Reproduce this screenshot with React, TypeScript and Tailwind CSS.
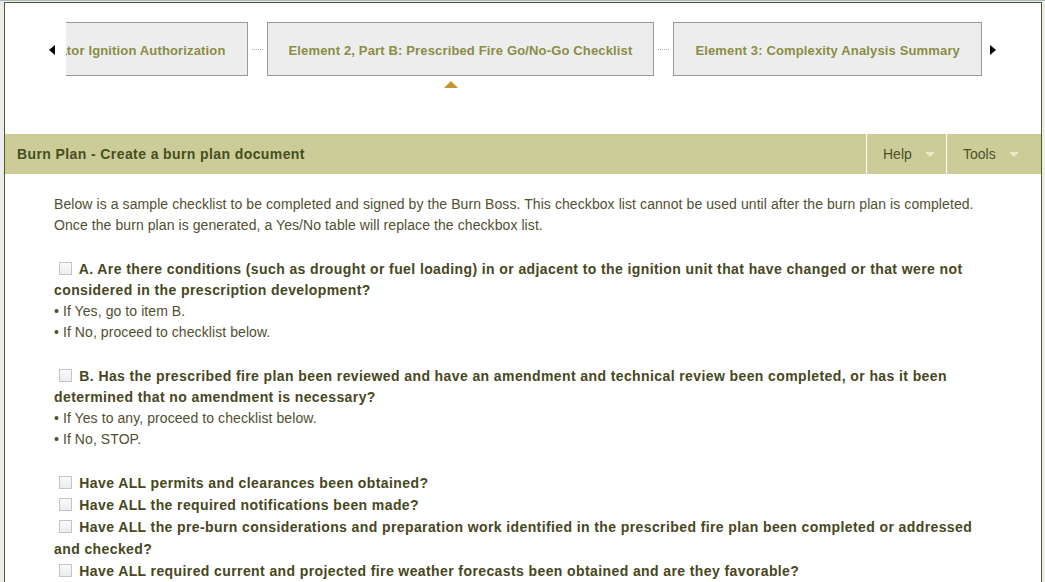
import React from 'react'

const FONT = { fontFamily: '"Liberation Sans", Arial, sans-serif' }

function Tab({ label, active }: { label: string; active?: boolean }) {
  return (
    <div className="relative shrink-0">
      <div className="h-[54px] px-[21px] pt-[3px] flex items-center border border-[#999999] bg-[#ededed] text-[13px] tracking-[0.15px] font-bold text-[#8b8c46] whitespace-nowrap">
        {label}
      </div>
      {/* active marker */}
      {active && (
        <div className="absolute top-[59px] left-[177px] w-0 h-0 border-l-[7px] border-r-[7px] border-b-[7px] border-l-transparent border-r-transparent border-b-[#c8962e]" />
      )}
    </div>
  )
}

function Connector() {
  return (
    <div className="shrink-0 w-[19px] h-[54px] flex items-center justify-center">
      <div className="w-[11px] border-t border-dotted border-[#aaaaaa]" />
    </div>
  )
}

function Box() {
  return (
    <span className="inline-block w-[13px] h-[13px] ml-[5px] mr-[3px] align-[-1px] border border-[#c4c4c4] bg-gradient-to-b from-[#fbfbfb] to-[#ececec]" />
  )
}

function Dropdown({ label, width }: { label: string; width: string }) {
  return (
    <div className={`${width} h-full border-l border-white flex items-center pl-[16px] pt-[1px] gap-[13px] text-[14px] text-[#4b5124]`}>
      <span>{label}</span>
      <span className="w-0 h-0 border-l-[5px] border-r-[5px] border-t-[5px] border-l-transparent border-r-transparent border-t-[#e9e9cc]" />
    </div>
  )
}

export default function App() {
  return (
    <div style={FONT} className="min-h-screen bg-[#ececec] border-t border-[#a9b6c4] pt-[1px] pl-[4px] pr-[3px]">
      <div className="border border-[#4d5a22] bg-white min-h-[600px]">
        {/* Element carousel */}
        <div className="h-[131px] pt-[19px] pl-[44px] flex items-start">
          <div className="mt-[23px] w-0 h-0 border-t-[5px] border-b-[5px] border-r-[6px] border-t-transparent border-b-transparent border-r-black" />
          <div className="ml-[11px] w-[916px] h-[75px] overflow-hidden flex justify-end items-start">
            <Tab label="Element 2, Part A: Agency Administrator Ignition Authorization" />
            <Connector />
            <Tab label="Element 2, Part B: Prescribed Fire Go/No-Go Checklist" active />
            <Connector />
            <Tab label="Element 3: Complexity Analysis Summary" />
          </div>
          <div className="ml-[8px] mt-[23px] w-0 h-0 border-t-[5px] border-b-[5px] border-l-[6px] border-t-transparent border-b-transparent border-l-black" />
        </div>

        {/* Section header */}
        <div className="h-[40px] bg-[#cccc99] flex items-center">
          <div className="flex-1 pl-[12px] pt-[1px] text-[14px] tracking-[0.4px] font-bold text-[#45501e]">
            Burn Plan - Create a burn plan document
          </div>
          <Dropdown label="Help" width="w-[80px]" />
          <Dropdown label="Tools" width="w-[95px]" />
        </div>

        {/* Checklist body */}
        <div className="pt-[20px] pl-[49px] pr-[49px] pb-[8px] text-[14px] tracking-[0.08px] text-[#50502f]">
          <p className="leading-[21px]">
            Below is a sample checklist to be completed and signed by the Burn Boss. This checkbox list cannot be used until after the burn plan is completed. Once the burn plan is generated, a Yes/No table will replace the checkbox list.
          </p>

          <div className="mt-[23px] leading-[21px]">
            <p className="font-bold tracking-[0.4px] text-[#47471d]">
              <Box /> A. Are there conditions (such as drought or fuel loading) in or adjacent to the ignition unit that have changed or that were not considered in the prescription development?
            </p>
            <p>• If Yes, go to item B.</p>
            <p>• If No, proceed to checklist below.</p>
          </div>

          <div className="mt-[23px] leading-[21px]">
            <p className="font-bold tracking-[0.4px] text-[#47471d]">
              <Box /> B. Has the prescribed fire plan been reviewed and have an amendment and technical review been completed, or has it been determined that no amendment is necessary?
            </p>
            <p>• If Yes to any, proceed to checklist below.</p>
            <p>• If No, STOP.</p>
          </div>

          <div className="mt-[22px] leading-[22px] font-bold tracking-[0.4px] text-[#47471d]">
            <p><Box /> Have ALL permits and clearances been obtained?</p>
            <p><Box /> Have ALL the required notifications been made?</p>
            <p><Box /> Have ALL the pre-burn considerations and preparation work identified in the prescribed fire plan been completed or addressed and checked?</p>
            <p><Box /> Have ALL required current and projected fire weather forecasts been obtained and are they favorable?</p>
          </div>
        </div>
      </div>
    </div>
  )
}
